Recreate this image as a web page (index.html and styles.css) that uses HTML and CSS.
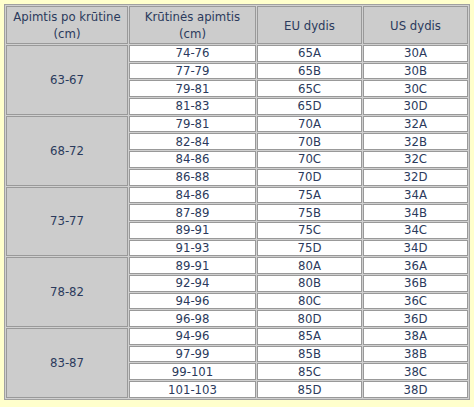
FILE: index.html
```html
<!DOCTYPE html>
<html>
<head>
<meta charset="utf-8">
<link rel="stylesheet" href="styles.css">
</head>
<body>
<table class="sizes">
  <colgroup>
    <col class="c1"><col class="c2"><col class="c3"><col class="c4">
  </colgroup>
  <tr class="head">
    <th>Apimtis po krūtine<br>(cm)</th>
    <th>Krūtinės apimtis<br>(cm)</th>
    <th>EU dydis</th>
    <th>US dydis</th>
  </tr>
  <tr><td class="grp" rowspan="4">63-67</td><td>74-76</td><td>65A</td><td>30A</td></tr>
  <tr><td>77-79</td><td>65B</td><td>30B</td></tr>
  <tr><td>79-81</td><td>65C</td><td>30C</td></tr>
  <tr><td>81-83</td><td>65D</td><td>30D</td></tr>
  <tr><td class="grp" rowspan="4">68-72</td><td>79-81</td><td>70A</td><td>32A</td></tr>
  <tr><td>82-84</td><td>70B</td><td>32B</td></tr>
  <tr><td>84-86</td><td>70C</td><td>32C</td></tr>
  <tr><td>86-88</td><td>70D</td><td>32D</td></tr>
  <tr><td class="grp" rowspan="4">73-77</td><td>84-86</td><td>75A</td><td>34A</td></tr>
  <tr><td>87-89</td><td>75B</td><td>34B</td></tr>
  <tr><td>89-91</td><td>75C</td><td>34C</td></tr>
  <tr><td>91-93</td><td>75D</td><td>34D</td></tr>
  <tr><td class="grp" rowspan="4">78-82</td><td>89-91</td><td>80A</td><td>36A</td></tr>
  <tr><td>92-94</td><td>80B</td><td>36B</td></tr>
  <tr><td>94-96</td><td>80C</td><td>36C</td></tr>
  <tr><td>96-98</td><td>80D</td><td>36D</td></tr>
  <tr><td class="grp" rowspan="4">83-87</td><td>94-96</td><td>85A</td><td>38A</td></tr>
  <tr><td>97-99</td><td>85B</td><td>38B</td></tr>
  <tr><td>99-101</td><td>85C</td><td>38C</td></tr>
  <tr><td>101-103</td><td>85D</td><td>38D</td></tr>
</table>
</body>
</html>
```
FILE: styles.css
```css
html, body {
  margin: 0;
  padding: 0;
  background: #ffffcc;
}
body {
  padding: 4px;
  font-family: "DejaVu Sans Condensed", "DejaVu Sans", sans-serif;
  font-size: 13px;
  color: #2b3a5c;
}
.sizes {
  width: 466px;
  height: 396px;
  border-collapse: separate;
  border-spacing: 1px;
  border: 1px solid #a0a0a0;
  background: #d0d0d0;
  table-layout: fixed;
}
.c1 { width: 122px; }
.c2 { width: 127px; }
.c3 { width: 105px; }
.c4 { width: 105px; }
.sizes th, .sizes td {
  border: 1px solid #999999;
  padding: 0;
  text-align: center;
  vertical-align: middle;
  font-weight: normal;
  line-height: 14px;
}
.sizes th {
  background: #cccccc;
  height: 36px;
  line-height: 17px;
}
.sizes td {
  background: #ffffff;
}
.sizes td.grp {
  background: #cccccc;
}
```
